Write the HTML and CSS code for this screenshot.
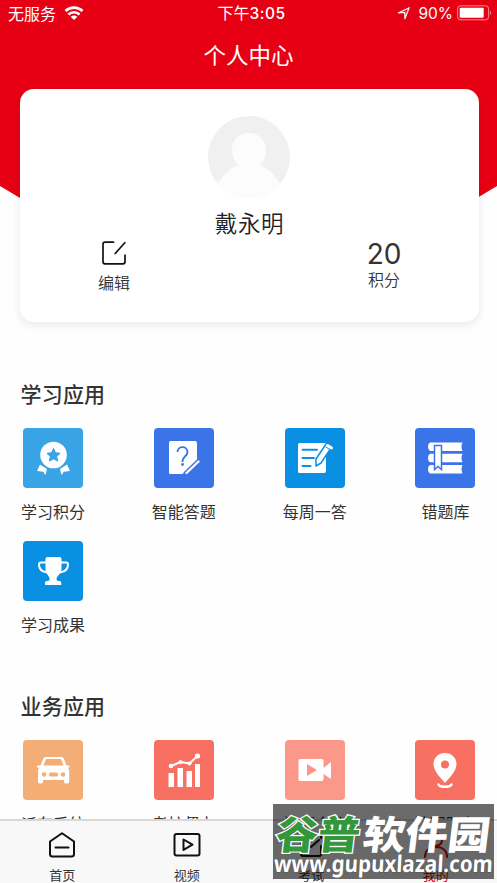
FILE: index.html
```html
<!DOCTYPE html>
<html lang="zh-CN">
<head>
<meta charset="utf-8">
<title>个人中心</title>
<link rel="stylesheet" href="styles.css">
</head>
<body>
<div class="screen">
  <div class="hero-bg"></div>
  <header class="status">
    <div class="status-left"><span>无服务</span>
      <svg width="20" height="14" viewBox="0 0 20 14" fill="none" stroke="#fff" stroke-width="2.700"><path d="M1.500 5C6.400.6 13.600.6 18.500 5M4.400 8.400c3.200-2.900 8-2.900 11.200 0"/><path d="M6.700 10.800c2-1.700 4.600-1.700 6.600 0L10 14z" fill="#fff" stroke="none"/></svg>
    </div>
    <div class="status-time">下午<b>3:05</b></div>
    <div class="status-right">
      <svg width="13" height="13" viewBox="0 0 13 13" fill="none" stroke="#fff" stroke-width="1.200"><path d="M1 6 12 1 7.800 12V5.500z"/></svg>
      <span>90%</span>
      <svg class="battery" width="35" height="16" viewBox="0 0 35 16"><rect x=".6" y=".8" width="31" height="14" rx="3" fill="none" stroke="#fff" stroke-opacity=".55"/><rect x="2.700" y="2.800" width="24" height="10" rx="1" fill="#fff"/><path d="M33 5.500q2 2.300 0 4.600z" fill="#fff" opacity=".6"/></svg>
    </div>
  </header>
  <h1 class="title">个人中心</h1>

  <section class="card">
    <svg class="avatar" width="82" height="82" viewBox="0 0 82 82"><defs><clipPath id="round"><circle cx="41" cy="41" r="41"/></clipPath></defs><g clip-path="url(#round)"><path fill="#f0f0f0" d="M0 0h82v82H0z"/><path fill="#fcfcfc" d="M41 17c10 0 17 7 17 17 0 6-2.500 11-6.500 15C60 52 66 58 73 69v14H9V69c7-11 13-17 21.500-20C26.500 45 24 40 24 34c0-10 7-17 17-17z"/></g></svg>
    <div class="name">戴永明</div>
    <div class="stats">
      <div class="stat stat-edit">
        <svg width="24" height="24" viewBox="0 0 24 24" fill="none" stroke="#111" stroke-width="1.700" stroke-linecap="round" stroke-linejoin="round"><path d="M11.500 1.200H3Q1 1.200 1 3.200v17.600q0 2 2 2h18q2 0 2-2V14M13.200 12.500 22.800 1.700"/></svg>
        <span>编辑</span>
      </div>
      <div class="stat stat-points"><strong>20</strong><span>积分</span></div>
    </div>
  </section>

  <section class="apps study">
    <h2>学习应用</h2>
    <div class="grid">
      <div class="app"><div class="tile sky">
        <svg viewBox="0 0 60 60"><circle cx="30.500" cy="27" r="13.300" fill="#fff"/><path fill="#38a3e5" stroke="#38a3e5" stroke-linejoin="round" d="m30.500 20.500 2 4.200 4.600.6-3.400 3.200.9 4.600-4.100-2.300-4.100 2.300.9-4.600-3.400-3.200 4.600-.6z"/><path fill="#fff" d="m17 36.500 7 4.500-1.500 6-2.300-3.300-6.200-.7zM44 36.500l-7 4.500 1.500 6 2.300-3.300 6.200-.7z"/></svg>
      </div><span>学习积分</span></div>
      <div class="app"><div class="tile royal">
        <svg viewBox="0 0 60 60"><path fill="#fff" d="M16.500 13H41q2 0 2 2v17L28.500 46h-12q-1.500 0-1.500-1.500v-30q0-1.500 1.500-1.500z"/><path d="M23.500 24c0-6.500 10-6.500 10 0 0 4.500-5 4.500-5 9v1" fill="none" stroke="#3b74e8" stroke-width="1.900"/><circle cx="28.500" cy="36.500" r="1.400" fill="#3b74e8"/><path d="M31 46 44.500 33" stroke="#3b74e8" stroke-width="4.500"/><path d="M32.500 45 44.500 33.500" stroke="#fff" stroke-width="2.400" stroke-linecap="round"/></svg>
      </div><span>智能答题</span></div>
      <div class="app"><div class="tile blue">
        <svg viewBox="0 0 60 60"><path fill="#fff" d="M14.500 15H41v28q0 2-2 2H14.500q-1.500 0-1.500-1.500v-27q0-1.500 1.500-1.500z"/><path stroke="#0a90e3" stroke-width="1.900" stroke-linecap="round" d="M17.500 21.700H32M17.500 30H29M17.500 38h8"/><path fill="#fff" stroke="#0a90e3" stroke-width="1.500" stroke-linejoin="round" d="m31 31 10-15 5.500 3.200L36 35l-5 3z"/><path d="m42.500 17.500 4 2.500" stroke="#fff" stroke-width="3" stroke-linecap="round"/><path d="m40.500 18.800 5 3" stroke="#0a90e3"/></svg>
      </div><span>每周一答</span></div>
      <div class="app"><div class="tile royal">
        <svg viewBox="0 0 60 60"><path fill="#fff" d="M15 14.500h32.500q-2 4.300 0 8.600H15q-2-1-2-4.300t2-4.300zm0 11.200h32.500q-2 4.300 0 8.600H15q-2-1-2-4.300t2-4.300zm0 11.200h32.500q-2 4.300 0 8.600H15q-2-1-2-4.300t2-4.300z"/><path fill="#fff" stroke="#3b74e8" stroke-width="1.500" d="M19.500 17.500h7v24l-3.500-3-3.500 3z"/></svg>
      </div><span>错题库</span></div>
      <div class="app"><div class="tile blue">
        <svg viewBox="0 0 60 60"><path fill="#fff" d="M22.500 18q0-2 2-2h12q2 0 2 2v10c0 5-5 7-5 10q0 2 2 2h1q1.700 0 1.700 1.700V44H22v-2.300q0-1.700 1.700-1.700h1q2 0 2-2c0-3-4.200-5-4.200-10z"/><path fill="none" stroke="#fff" stroke-width="2" d="M23 21.500h-5q-2 0-2 2c0 4.500 3 7.500 8.500 8M38 21.500h5q2 0 2 2c0 4.500-3 7.500-8.500 8"/></svg>
      </div><span>学习成果</span></div>
    </div>
  </section>

  <section class="apps work">
    <h2>业务应用</h2>
    <div class="grid">
      <div class="app"><div class="tile orange">
        <svg viewBox="0 0 60 60"><path fill="#fff" d="m20 19 1-1.200q1-.8 2.500-.8h14q1.500 0 2.500.8L41 19l2.500 6.500h3v2h-1.500q1.200 2 1.200 4V42q0 1.500-2.700 1.500T41 42v-2H20v2q0 1.500-2.500 1.500T15 42V31.500q0-2 1.200-4H14v-2h3.500z"/><path fill="#f3ad75" d="M23 19h15l2.500 6.500h-20z"/><circle cx="21" cy="34.500" r="2.300" fill="#f3ad75"/><circle cx="40" cy="34.500" r="2.300" fill="#f3ad75"/><rect x="26" y="32.500" width="9" height="4" rx="1.500" fill="#f3ad75"/></svg>
      </div><span>派车系统</span></div>
      <div class="app"><div class="tile coral">
        <svg viewBox="0 0 60 60"><path fill="#fff" d="M14.500 33H20v14h-5.500zM23.500 28H29v19h-5.500zM32.500 31H38v16h-5.500zM41 24h5v23h-5z"/><path fill="none" stroke="#fff" stroke-width="1.900" d="m17 26 9.500-4 9 1.500L44 15.500"/><g fill="#fff"><circle cx="17" cy="26" r="2.300"/><circle cx="26.500" cy="22" r="2"/><circle cx="35.500" cy="23.500" r="2"/><circle cx="43.500" cy="16" r="2.600"/></g></svg>
      </div><span>考核督办</span></div>
      <div class="app"><div class="tile pink">
        <svg viewBox="0 0 60 60"><path fill="#fff" d="M15 19h22q1.500 0 1.500 1.500V28l7.500-6v17l-7.500-5v5q0 2-1.500 2H15q-1.500 0-1.500-1.500v-19Q13.500 19 15 19z"/><path fill="#fb9889" d="m22 24 10 6-10 6z"/></svg>
      </div><span>视频会议</span></div>
      <div class="app"><div class="tile coral">
        <svg viewBox="0 0 60 60"><path fill="#fff" fill-rule="evenodd" d="M30 13c6.500 0 11.500 4.700 11.500 11C41.500 31 35 37 30 43c-5-6-11.500-12-11.500-19 0-6.300 5-11 11.500-11zm0 7.500a4 4 0 1 0 0 8 4 4 0 0 0 0-8z"/><path d="M23.500 44.500c1 3 12 3 13 0" fill="none" stroke="#fff" stroke-width="2.400" stroke-linecap="round"/></svg>
      </div><span>地图服务</span></div>
    </div>
  </section>

  <nav class="tabs">
    <div class="tab"><svg width="28" height="26" viewBox="0 0 28 26"><path d="M2 9.500 14 1.200l12 8.300V22q0 2.500-2.500 2.500h-19Q2 24.500 2 22zM7.500 15.500h13"/></svg><span>首页</span></div>
    <div class="tab"><svg width="28" height="26" viewBox="0 0 28 26"><rect x="1.500" y="2" width="25" height="21.500" rx="2"/><path d="m10.500 7.500 9 5.200-9 5.200z"/></svg><span>视频</span></div>
    <div class="tab"><svg width="28" height="26" viewBox="0 0 28 26"><path d="M24 14v8q0 2-2 2H6q-2 0-2-2V4q0-2 2-2h16q2 0 2 2v2M9 11l5 4 8-7"/></svg><span>考试</span></div>
    <div class="tab active"><svg width="28" height="26" viewBox="0 0 28 26"><circle cx="14" cy="8" r="6"/><path d="M3 25c0-6 4-10 11-10s11 4 11 10"/></svg><span>我的</span></div>
  </nav>

  <svg class="watermark" width="221" height="75" viewBox="0 0 221 75">
    <rect width="221" height="75" fill="#000" fill-opacity=".58"/>
    <g class="brand" transform="translate(5 0) skewX(-7)">
      <text class="green" x="2" y="44.500" textLength="84" lengthAdjust="spacingAndGlyphs">谷普</text>
      <text x="89" y="44.500" textLength="127" lengthAdjust="spacingAndGlyphs">软件园</text>
    </g>
    <text class="site" transform="translate(4 0) skewX(-3)" x="0" y="68.500" textLength="219" lengthAdjust="spacingAndGlyphs">www.gupuxlazal.com</text>
  </svg>
</div>
</body>
</html>
```
FILE: styles.css
```css
* { box-sizing: border-box; }
body {
  margin: 0;
  font-family: "Noto Sans CJK SC", "Noto Sans", sans-serif;
  color: #333;
}
.screen {
  position: relative;
  width: 497px;
  height: 883px;
  overflow: hidden;
  background: #fefefe;
}
.hero-bg {
  position: absolute;
  inset: 0 0 auto;
  height: 198px;
  background: #e70014;
  clip-path: polygon(0 0, 100% 0, 100% 186px, 477px 198px, 20px 198px, 0 186px);
}
.status {
  position: relative;
  display: grid;
  grid-template-columns: 1fr auto 1fr;
  align-items: center;
  height: 25px;
  padding: 0 5px 0 8px;
  color: #fff;
  font-size: 16px;
  line-height: 25px;
}
.status-left, .status-right { display: flex; align-items: center; }
.status-left { gap: 8px; }
.status-time { font-size: 16px; padding-left: 3px; }
.status-time b { font-family: Inter, sans-serif; font-size: 15.5px; font-weight: 500; letter-spacing: .5px; }
.status-right { justify-content: flex-end; font-family: Inter, sans-serif; font-size: 15.5px; }
.status-right span { margin: 0 4px 0 8px; }
.title {
  position: relative;
  margin: 10px 0 0;
  height: 38px;
  text-align: center;
  color: #fff;
  font-size: 22.5px;
  line-height: 38px;
  font-weight: 400;
}
.card {
  position: relative;
  display: flex;
  flex-direction: column;
  align-items: center;
  height: 233px;
  margin: 16px 18px 0 20px;
  padding-top: 27px;
  border-radius: 14px;
  background: #fff;
  box-shadow: 0 3px 9px rgba(0, 0, 0, .09);
}
.avatar { margin-right: 1px; }
.name { margin-top: 8px; font-size: 22.5px; line-height: 32px; font-weight: 350; letter-spacing: .6px; color: #222; }
.stats { display: flex; justify-content: space-between; width: 100%; padding: 1px 77px 0 76px; }
.stat { display: flex; flex-direction: column; align-items: center; width: 36px; font-size: 16px; line-height: 22px; font-weight: 350; }
.stat span { white-space: nowrap; }
.stat-edit { padding-top: 2px; }
.stat-edit span { margin-top: 6px; }
.stat strong { font: 400 28px/28px Inter, sans-serif; }
.stat-points { padding-top: 1px; }
.apps h2 { margin: 0 0 0 20.5px; font-size: 21px; line-height: 30px; font-weight: 500; letter-spacing: .2px; }
.study { padding-top: 56px; }
.work { padding-top: 53px; }
.grid {
  display: grid;
  grid-template-columns: repeat(4, 65px);
  justify-content: space-between;
  row-gap: 17px;
  margin: 20px 19px 0 20.5px;
}
.app { display: flex; flex-direction: column; align-items: center; height: 96px; font-size: 16px; line-height: 24px; }
.app span { margin-top: 10.5px; white-space: nowrap; }
.tile { flex: none; width: 60px; height: 60px; border-radius: 4px; }
.tile svg { display: block; width: 60px; height: 60px; }
.sky { background: #38a3e5; }
.royal { background: #3b74e8; }
.blue { background: #0a90e3; }
.orange { background: #f3ad75; }
.coral { background: #f77062; }
.pink { background: #fb9889; }
.tabs {
  position: absolute;
  inset: 819px -1px 0 0;
  display: flex;
  border-top: 2px solid #d8d8d8;
  background: #f8f8f8;
}
.tab { flex: 1; display: flex; flex-direction: column; align-items: center; padding-top: 11px; font-size: 13px; line-height: 16px; }
.tab svg { flex: none; fill: none; stroke: #111; stroke-width: 2; stroke-linecap: round; stroke-linejoin: round; }
.tab span { margin-top: 8.5px; }
.active { color: #e70014; }
.active svg { stroke: #e70014; }
.watermark { position: absolute; left: 273px; top: 804px; overflow: visible; }
.watermark text { fill: #fff; }
.brand { font-size: 39px; font-weight: 900; }
.brand .green { fill: #35973c; stroke: #fff; stroke-width: 2.5px; paint-order: stroke; }
.site { font-family: "Noto Sans", sans-serif; font-size: 23px; font-weight: 700; stroke: #555; stroke-width: 1px; paint-order: stroke; }
```
